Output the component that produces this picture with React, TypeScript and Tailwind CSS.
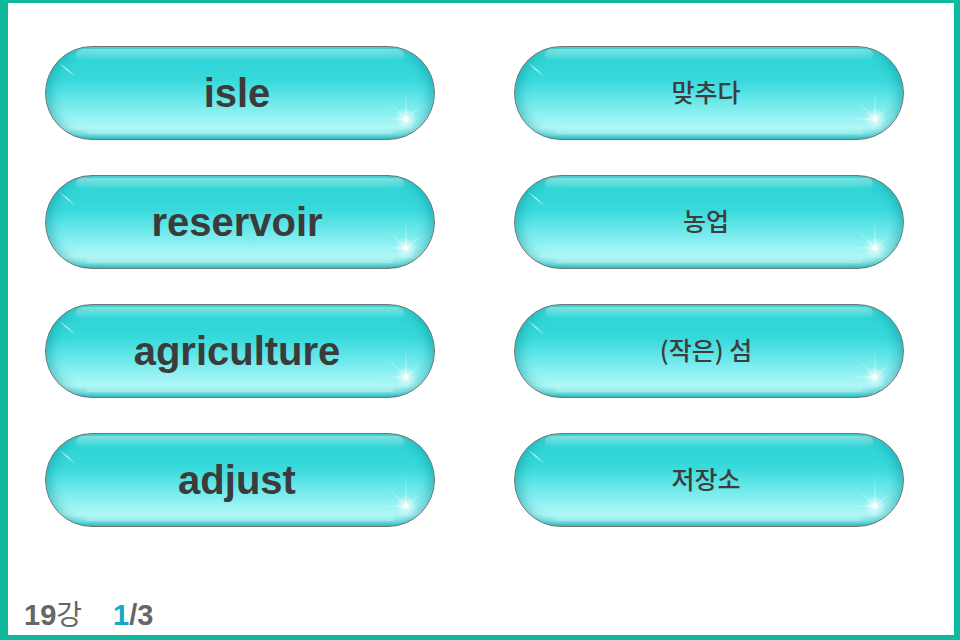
import React from "react";

const words = [
  { en: "isle", ko: "맞추다" },
  { en: "reservoir", ko: "농업" },
  { en: "agriculture", ko: "(작은) 섬" },
  { en: "adjust", ko: "저장소" },
];

function Sparkle() {
  return (
    <svg
      className="absolute right-[-4px] bottom-[-12px] pointer-events-none"
      width="64"
      height="64"
      viewBox="0 0 64 64"
    >
      <defs>
        <radialGradient id="glow" cx="50%" cy="50%" r="50%">
          <stop offset="0%" stopColor="#ffffff" stopOpacity="1" />
          <stop offset="25%" stopColor="#ffffff" stopOpacity="0.6" />
          <stop offset="100%" stopColor="#ffffff" stopOpacity="0" />
        </radialGradient>
        <linearGradient id="rayV" x1="0" y1="0" x2="0" y2="1">
          <stop offset="0%" stopColor="#fff" stopOpacity="0" />
          <stop offset="100%" stopColor="#fff" stopOpacity="0.8" />
        </linearGradient>
        <linearGradient id="rayH" x1="0" y1="0" x2="1" y2="0">
          <stop offset="0%" stopColor="#fff" stopOpacity="0" />
          <stop offset="100%" stopColor="#fff" stopOpacity="0.8" />
        </linearGradient>
        <linearGradient id="rayD" x1="0" y1="0" x2="1" y2="1">
          <stop offset="0%" stopColor="#fff" stopOpacity="0" />
          <stop offset="100%" stopColor="#fff" stopOpacity="0.8" />
        </linearGradient>
      </defs>
      <circle cx="32" cy="32" r="11" fill="url(#glow)" />
      <rect x="31.5" y="2" width="1" height="30" fill="url(#rayV)" />
      <rect x="8" y="31.5" width="24" height="1" fill="url(#rayH)" />
      <line x1="12" y1="12" x2="32" y2="32" stroke="url(#rayD)" strokeWidth="1" />
      <line x1="44" y1="22" x2="32" y2="32" stroke="#fff" strokeOpacity="0.45" strokeWidth="1" />
      <circle cx="32" cy="32" r="2.5" fill="#ffffff" />
    </svg>
  );
}

function GlossButton({ children }: { children: React.ReactNode }) {
  return (
    <div className="relative h-[94px] w-[390px] rounded-full border border-[#6e7676] overflow-hidden bg-[linear-gradient(180deg,#4cdada_0%,#2fd5d7_14%,#38d9db_36%,#66e7e9_57%,#95f2f3_76%,#b0f7f7_88%,#7ee4e4_95%,#36c3c4_100%)] shadow-[inset_10px_0_12px_-6px_rgba(0,130,140,0.45),inset_-10px_0_12px_-6px_rgba(0,130,140,0.45)] flex items-center justify-center">
      <div className="absolute left-[30px] right-[30px] top-[2px] h-[12px] rounded-full bg-[linear-gradient(180deg,rgba(255,255,255,0.32),rgba(255,255,255,0))]" />
      <div className="absolute left-[40px] right-[40px] bottom-[5px] h-[6px] rounded-full bg-[linear-gradient(180deg,rgba(255,255,255,0),rgba(255,255,255,0.25))]" />
      <div className="absolute left-[10px] top-[22px] w-[22px] h-px rotate-[40deg] bg-[linear-gradient(90deg,rgba(255,255,255,0),rgba(255,255,255,0.9),rgba(255,255,255,0))]" />
      <Sparkle />
      <div className="relative pr-[6px]">{children}</div>
    </div>
  );
}

export default function App() {
  return (
    <div className="w-[960px] h-[640px] bg-white border-l-[8px] border-t-[3px] border-r-[6px] border-b-[5px] border-[#0fb99d] flex flex-col">
      <div className="grid grid-cols-[390px_390px] gap-x-[79px] gap-y-[35px] pl-[37px] pt-[43px]">
        {words.map((w) => (
          <React.Fragment key={w.en}>
            <GlossButton>
              <span className="font-['Liberation_Sans',Arial,sans-serif] font-bold text-[40px] leading-none text-[#3b3b3b]">
                {w.en}
              </span>
            </GlossButton>
            <GlossButton>
              <span className="font-['Noto_Sans_CJK_KR','Liberation_Sans',sans-serif] font-medium text-[25px] leading-none text-[#3d3d3d]">
                {w.ko}
              </span>
            </GlossButton>
          </React.Fragment>
        ))}
      </div>
      <div className="mt-auto pl-[16px] pb-[5px] flex items-baseline font-['Liberation_Sans','Noto_Sans_CJK_KR',sans-serif] text-[29px] leading-none text-[#666666]">
        <span className="font-bold">19</span>
        <span className="font-['Noto_Sans_CJK_KR',sans-serif] font-normal text-[28px]">강</span>
        <span className="ml-[31px] font-bold text-[#14a9c6]">1</span>
        <span className="font-bold">/3</span>
      </div>
    </div>
  );
}
